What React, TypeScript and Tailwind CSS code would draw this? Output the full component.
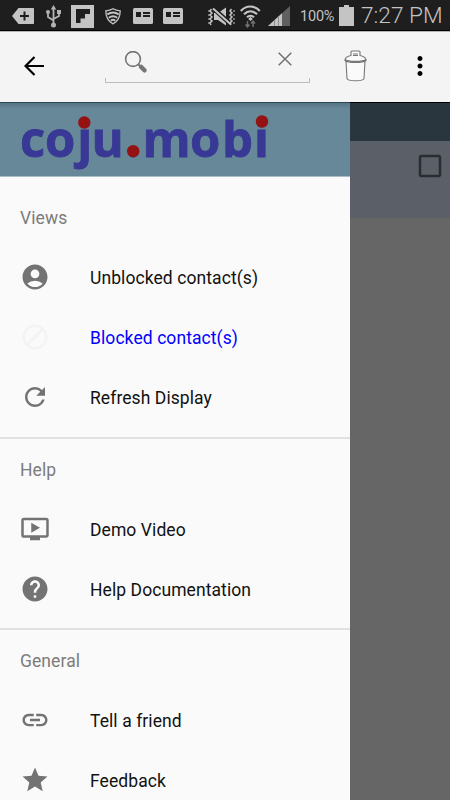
import {
  MdAccountCircle,
  MdBlock,
  MdCheckBoxOutlineBlank,
  MdHelp,
  MdLink,
  MdMoreVert,
  MdOndemandVideo,
  MdRefresh,
  MdStar,
} from 'react-icons/md';
import type { IconType } from 'react-icons';
import clsx from 'clsx';

interface MenuItem {
  label: string;
  icon: IconType;
  active?: boolean;
}

interface MenuSection {
  title: string;
  items: MenuItem[];
}

const sections: MenuSection[] = [
  {
    title: 'Views',
    items: [
      { label: 'Unblocked contact(s)', icon: MdAccountCircle },
      { label: 'Blocked contact(s)', icon: MdBlock, active: true },
      { label: 'Refresh Display', icon: MdRefresh },
    ],
  },
  {
    title: 'Help',
    items: [
      { label: 'Demo Video', icon: MdOndemandVideo },
      { label: 'Help Documentation', icon: MdHelp },
    ],
  },
  {
    title: 'General',
    items: [
      { label: 'Tell a friend', icon: MdLink },
      { label: 'Feedback', icon: MdStar },
    ],
  },
];

const CardIcon = () => (
  <svg width="20" height="16" viewBox="0 0 20 16">
    <rect width="20" height="16" rx="1.5" fill="#c4c4c4" />
    <path d="M3 4h5v5H3zM10 4h7v2h-7zM10 7h7v2h-7z" fill="#1e1e1e" />
  </svg>
);

const StatusBar = () => (
  <div className="flex h-[31px] shrink-0 items-center border-b border-black bg-[#1e1e1e] text-[#c4c4c4]">
    <svg className="ml-3 mt-0.5" width="22" height="18" viewBox="0 0 22 18">
      <path d="M6.500 1H21c.6 0 1 .4 1 1v14c0 .6-.4 1-1 1H6.500L0 9z" fill="#c4c4c4" />
      <path d="M12.5 4.5v9M8 9h9" stroke="#1e1e1e" strokeWidth="2" />
    </svg>
    <svg className="ml-3 mt-0.5" width="15" height="23" viewBox="0 0 15 23" fill="none" stroke="#b4b4b4" strokeWidth="1.8">
      <path d="M7.5 3v16M7.5 15.5L2 12V7.5M7.5 14L13 11V6" />
      <path d="M4.8 4.5L7.5 0l2.7 4.5z" fill="#b4b4b4" stroke="none" />
      <circle cx="7.5" cy="20" r="2.5" fill="#b4b4b4" stroke="none" />
      <circle cx="2" cy="7" r="2" fill="#b4b4b4" stroke="none" />
      <path d="M11 5h4v4h-4z" fill="#b4b4b4" stroke="none" />
    </svg>
    <svg className="ml-[10px] mt-0.5" width="23" height="23" viewBox="0 0 23 23">
      <rect width="23" height="23" fill="#c4c4c4" />
      <path d="M5 4h14v5h-5v4.500H9.500V18H5z" fill="#1e1e1e" />
    </svg>
    <svg className="ml-[11px] mt-0.5" width="16" height="17" viewBox="0 0 16 17" fill="none" stroke="#c4c4c4">
      <path d="M8 .8C5.700 2.200 3.500 2.700.8 2.800c0 6 2 10.500 7.200 13 5.200-2.500 7.200-7 7.200-13C12.500 2.700 10.300 2.200 8 .8z" strokeWidth="1.300" />
      <path d="M2.300 6.400c3.800-2.600 7.600-2.600 11.400 0M3.800 9.700c2.800-2 5.600-2 8.400 0M5.800 12.700c1.500-1.200 2.900-1.200 4.400 0" strokeWidth="1.900" />
    </svg>
    <div className="ml-[12px] mt-0.5 flex gap-[10px]">
      <CardIcon />
      <CardIcon />
    </div>
    <svg className="ml-[25px] mt-[3px]" width="27" height="19" viewBox="0 0 27 19" fill="none" stroke="#c4c4c4">
      <path d="M6 6h4l8-5.500v18L10 13H6z" fill="#c4c4c4" stroke="none" />
      <path d="M5 1l18 16.500" stroke="#1e1e1e" strokeWidth="4.500" />
      <path d="M5 1.500l18 16" strokeWidth="2" />
      <path d="M3.500 2L2 4l2 2-2 2 2 2-2 2 2 2-2 2 1 2M23.500 2L22 4l2 2-2 2 2 2-2 2 2 2-2 2 1 2" strokeWidth="1.500" />
      <path d="M1 3v14M26 3v14" strokeDasharray="2 2" />
    </svg>
    <svg className="ml-[5px] mt-[3px]" width="21" height="23" viewBox="0 0 21 23" fill="none" stroke="#c4c4c4" strokeWidth="2.200">
      <path d="M.8 6c5.500-6 13.500-6 19 0M4 9.300c4-4 9-4 13 0M7 12.300c2-2 5-2 7 0" />
      <path d="M10.500 11.800l2.300 2.300-2.300 2-2.300-2z" fill="#c4c4c4" stroke="none" />
      <path d="M7.500 16v6M5.500 19.500l2 2.300 2-2.300M13 22v-5.500M11 18.500l2-2.300 2 2.300" stroke="#707070" strokeWidth="1.500" />
    </svg>
    <svg className="ml-[7px] mt-px" width="22" height="20" viewBox="0 0 22 20">
      <path d="M0 20L22 0v20z" fill="#606060" />
      <path d="M0 20L14 7.300V20z" fill="#c4c4c4" />
      <path d="M6.500 14v6M10.500 11v9" stroke="#8e8e8e" />
    </svg>
    <span className="ml-[10px] mt-[4px] w-[36px] whitespace-nowrap text-[14.5px] leading-none tracking-[-0.2px]">100%</span>
    <svg className="ml-[3px] mt-px" width="15" height="21" viewBox="0 0 15 21" fill="#c4c4c4">
      <path d="M5 0h5v2h5v19H0V2h5z" />
    </svg>
    <span className="ml-[7px] mt-[3px] whitespace-nowrap text-[22.7px] font-light leading-none">7:27 PM</span>
  </div>
);

const Toolbar = () => (
  <div className="flex h-[71px] shrink-0 border-t border-[#b4b4b4] bg-[#f4f4f4]">
    <svg className="ml-6 mt-6 shrink-0" width="20" height="20" viewBox="0 0 20 20" fill="none" stroke="#000" strokeWidth="2.200">
      <path d="M20 10H2M10.500 1L1.500 10l9 9" />
    </svg>
    <div className="ml-[61px] flex h-[51px] w-[205px] shrink-0 flex-col justify-between">
      <div className="flex justify-between pl-[19px] pr-[18px] pt-[19px]">
        <svg width="23" height="22" viewBox="0 0 23 22" fill="none" stroke="#757575">
          <circle cx="9" cy="8" r="7.400" strokeWidth="1.600" />
          <path d="M14 13l3 3" strokeWidth="2" />
          <path d="M17.200 16l3.200 3.300" strokeWidth="4.500" strokeLinecap="round" />
        </svg>
        <svg className="mt-px" width="14" height="14" viewBox="0 0 14 14" stroke="#6c6c6c" strokeWidth="1.400">
          <path d="M.7.7l12.600 12.600M13.300.7L.7 13.300" />
        </svg>
      </div>
      <div className="h-[5px] border-x border-b border-[#bcbcbc]" />
    </div>
    <svg className="ml-[34px] mt-[18px] shrink-0" width="23" height="32" viewBox="0 0 23 32" fill="#fafafa" stroke="#777" strokeWidth="1.100">
      <path d="M2 11l1 17.500c.5 3 16.500 3 17 0l1-17.500z" />
      <path d="M1 10.500C.5 7 5 6 7 5.500V2c0-.8.4-1 1-1h7c.6 0 1 .2 1 1v3.500c2 .5 6.500 1.500 6 5-3 2.500-18 2.500-21 0z" />
      <path d="M1 9.500c3 2.500 18 2.500 21 0M9 4h5M9 5.500h5" fill="none" />
    </svg>
    <MdMoreVert className="ml-[38px] mt-[19px] h-[30px] w-[30px] shrink-0 text-black" />
  </div>
);

const Logo = () => (
  <div className="h-[75px] border-b border-t border-b-[#a9bbc4] border-t-[#284650] bg-[#678898]">
    <div className="bg-linear-to-b from-[#577583] to-[#678898] to-[6px]">
      <svg width="350" height="73" viewBox="0 103 350 73">
        <text
          x="20 45 77.3 91.5 126 142.500 190 222 254"
          y="156.500"
          fontFamily="'Open Sans', sans-serif"
          fontWeight="700"
          fontSize="49"
          fill="#383895"
          stroke="#383895"
          strokeWidth="0.800"
        >
          coju.mobi
        </text>
        <g fill="#951212">
          <circle cx="84.300" cy="122.500" r="6.200" />
          <circle cx="133.200" cy="151.200" r="6.200" />
          <circle cx="262" cy="121.500" r="6.200" />
        </g>
      </svg>
    </div>
  </div>
);

const MenuRow = ({ item }: { item: MenuItem }) => {
  const Icon = item.icon;
  return (
    <li className="flex h-[60px] items-center pl-5">
      <Icon className={clsx('h-[30px] w-[30px]', item.active ? 'text-[#f3f3f3]' : 'text-[#737373]')} />
      <span
        className={clsx(
          'ml-10 mt-0.5 whitespace-nowrap text-[17.5px] tracking-[0.08px]',
          item.active ? 'text-[#0000ff]' : 'text-[#111111]'
        )}
      >
        {item.label}
      </span>
    </li>
  );
};

const Drawer = () => (
  <nav className="w-[350px] shrink-0 overflow-hidden bg-[#fafafa]">
    <Logo />
    {sections.map((section, i) => (
      <section
        key={section.title}
        className={clsx(i === 0 ? 'pb-px pt-[10px]' : 'mt-[9px] border-t-2 border-[#e1e1e1]')}
      >
        <h2 className="flex h-[60px] items-center pl-5 pt-0.5 text-[17.5px] tracking-[0.08px] text-[#7c7c7c]">
          {section.title}
        </h2>
        <ul>
          {section.items.map((item) => (
            <MenuRow key={item.label} item={item} />
          ))}
        </ul>
      </section>
    ))}
  </nav>
);

export default function App() {
  return (
    <div className="flex h-[800px] w-[450px] flex-col overflow-hidden font-['Roboto',sans-serif]">
      <StatusBar />
      <Toolbar />
      <div className="flex min-h-0 flex-1">
        <Drawer />
        {/* Dimmed contact list behind the drawer */}
        <div className="flex-1 bg-[#666666]">
          <div className="h-[39px] border-t border-black bg-[#29363e]" />
          <div className="flex h-[77px] justify-end bg-[#5b6068] pr-[5px] pt-[10px]">
            <MdCheckBoxOutlineBlank className="h-[30px] w-[30px] text-[#292d31]" />
          </div>
        </div>
      </div>
    </div>
  );
}
